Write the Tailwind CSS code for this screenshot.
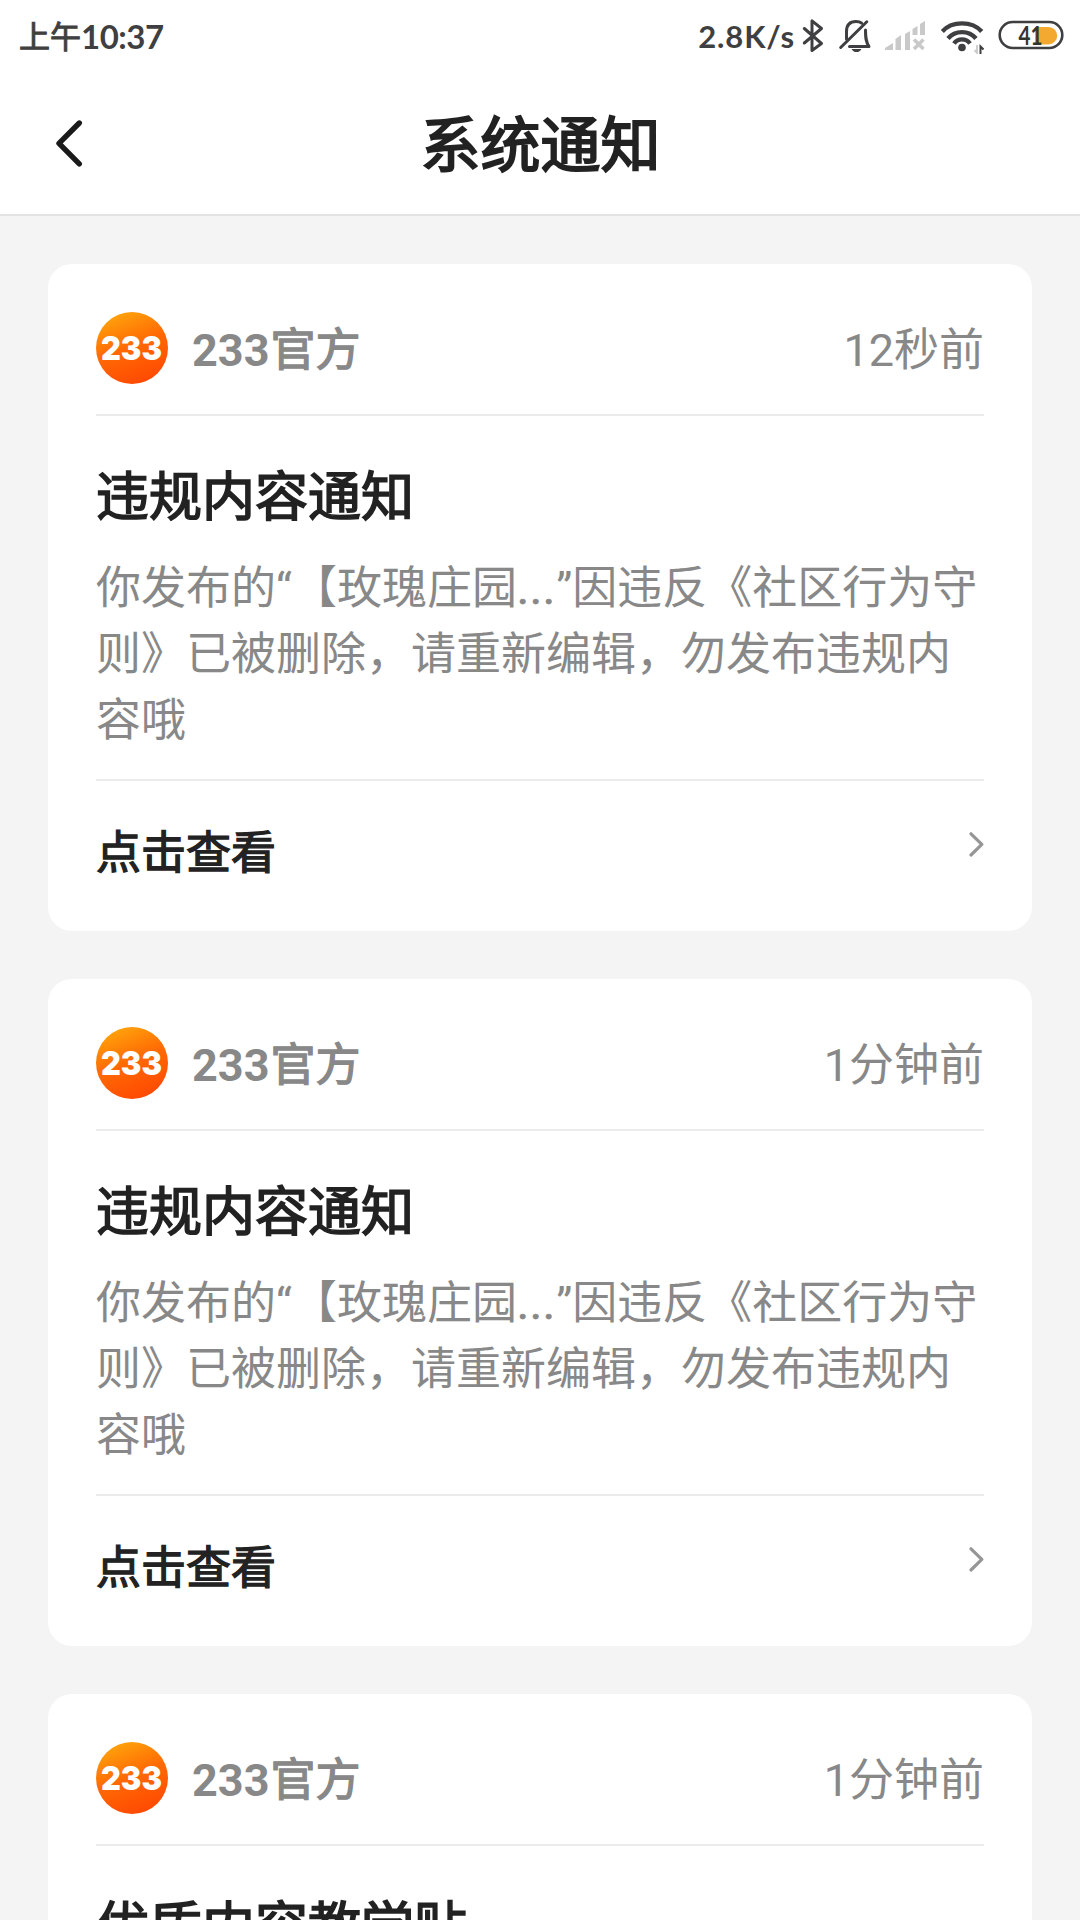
<!DOCTYPE html>
<html lang="zh-CN">
<head>
<meta charset="utf-8">
<title>系统通知</title>
<script src="https://cdn.jsdelivr.net/npm/@tailwindcss/browser@4"></script>
</head>
<body class="w-[1080px] h-[1920px] overflow-hidden bg-[#f4f4f4] text-[#222] font-[Roboto,'Noto_Sans_CJK_SC',sans-serif] [text-spacing-trim:space-all]">
<svg class="absolute size-0">
  <defs>
    <linearGradient id="g" x1="0.2" y1="0" x2="0.6" y2="1">
      <stop offset="0" stop-color="#ffa80c"/><stop offset="0.5" stop-color="#ff6a04"/><stop offset="1" stop-color="#ff4a02"/>
    </linearGradient>
    <symbol id="logo" viewBox="0 0 72 72">
      <circle cx="36" cy="36" r="36" fill="url(#g)"/>
      <text x="5" y="48" font-family="Inter, sans-serif" font-weight="900" font-size="32.500" fill="#fff" textLength="61" lengthAdjust="spacingAndGlyphs">233</text>
    </symbol>
    <symbol id="next" viewBox="0 0 16 26">
      <path d="M3 2.800 13.800 13.400 3 24" fill="none" stroke="#969696" stroke-width="3.2" stroke-linecap="round" stroke-linejoin="round"/>
    </symbol>
  </defs>
</svg>
<header class="h-[216px] bg-white border-b-2 border-[#e3e3e3]">
  <div class="h-18 pl-[19px] pr-[16px] flex items-center justify-between text-[#3f3f41] font-[Lato,'Noto_Sans_CJK_SC',sans-serif] font-bold">
    <div class="flex items-center leading-[72px]"><span class="text-[31px] font-normal [-webkit-text-stroke:1px_#3f3f41]">上午</span><span class="text-[33px] tracking-[-0.5px]">10:37</span></div>
    <div class="flex items-center">
      <span class="text-[31px] leading-[72px] tracking-[0.9px] mr-[7px]">2.8K/s</span>
      <svg class="w-[22px] h-[36px] mr-[14px]" viewBox="802 18 22 36" fill="none" stroke="#3f3f41" stroke-width="3" stroke-linejoin="round" stroke-linecap="round"><path d="M804.3 28.5 821.5 43.5 812 50.5V20.8L821.5 28.5 804.3 43"/></svg>
      <svg class="w-[34px] h-[36px] mr-[13px]" viewBox="838 18 34 36" fill="none" stroke="#3f3f41" stroke-width="3" stroke-linecap="round" stroke-linejoin="round"><path d="M840.7 47.5 866.8 21.8M846.5 39V31.5C846.5 25 850 21.5 856 21.5 858.5 21.5 860.2 22 861.5 23M865.5 30C865.5 38 865.8 42 869 46.6H849.5"/><path d="M851.5 49H861.5C860 51.5 858.5 52 856.5 52S853 51.5 851.5 49Z" fill="#3f3f41" stroke="none"/></svg>
      <svg class="w-[41px] h-[36px] mr-[15px]" viewBox="885 18 41 36" fill="#c9c9c9"><path d="M885 50v-2l8-5v7zM895.500 50V39l5.500-4v15zM905 50V34l5-3v19zM912.500 35V29l5-3v9zM920 35V24l5-3v14z"/><path d="m914 39.500 9.500 9.500M923.500 39.500 914 49" stroke="#c9c9c9" stroke-width="3.500"/></svg>
      <svg class="w-[43px] h-[36px] mr-[14px]" viewBox="941 18 43 36" fill="none" stroke="#3f3f41" stroke-width="4.400"><path d="M942.300 31.500C952 20.700 972 20.700 981.700 31.500M948 38.500C955 30 969 30 976 38.500M954 43.500C958 38 966 38 970 43.500"/><circle cx="962" cy="47.500" r="3.800" fill="#3f3f41" stroke="none"/><path d="M980.500 54V46.500L983.500 49.500" stroke-width="2"/><path d="M977 45v8l-2.500-3" stroke="#c9c9c9" stroke-width="1.800"/></svg>
      <svg class="w-[66px] h-[36px]" viewBox="998 18 66 36"><rect x="999.700" y="22" width="62.600" height="26" rx="13" fill="#fff" stroke="#3f3f41" stroke-width="2.600"/><path d="M1035 27h13.500a8.700 8.700 0 0 1 0 17.400H1035z" fill="#f3a92f"/><text x="1018.500" y="44.600" font-family="Lato, sans-serif" font-weight="700" font-size="26" fill="#333" textLength="24" lengthAdjust="spacingAndGlyphs">41</text></svg>
    </div>
  </div>
  <div class="h-[142px] px-[48px] grid grid-cols-[1fr_auto_1fr] items-center">
    <svg class="w-[40px] h-[50px]" viewBox="0 0 40 50" fill="none" stroke="#1a1a1a" stroke-width="5.400" stroke-linecap="round" stroke-linejoin="round"><path d="M31.300 5 11 25.300 31.300 45.800"/></svg>
    <h1 class="pt-[7px] pl-px text-[60px] leading-[88px] [-webkit-text-stroke:2px_#222]">系统通知</h1>
  </div>
</header>
<main class="p-12 flex flex-col gap-12">
  <article class="h-[667px] px-12 bg-white rounded-[24px]">
    <div class="h-[152px] pt-[18px] flex items-center border-b-2 border-[#ebebeb]">
      <svg class="size-[72px]"><use href="#logo"/></svg>
      <div class="ml-6 mt-1.5 text-[45px] leading-[60px] text-[#888] grow"><span class="font-bold">233</span><span class="ml-px [-webkit-text-stroke:1.3px_#888]">官方</span></div>
      <time class="mt-1.5 text-[45px] leading-[60px] text-[#888]">12秒前</time>
    </div>
    <h2 class="pt-[43px] text-[53px] leading-[78px] [-webkit-text-stroke:1.6px_#222]">违规内容通知</h2>
    <p class="pt-[19px] h-[242px] text-[45px] leading-[66px] text-[#888]">你发布的“【玫瑰庄园<span class="tracking-[1.2px] [-webkit-text-stroke:0.9px_#888]">...</span>”因违反《社区行为守<br>则》已被删除，请重新编辑，勿发布违规内<br>容哦</p>
    <a class="border-t-2 border-[#ebebeb] flex items-start justify-between"><span class="mt-[40px] text-[45px] leading-[66px] [-webkit-text-stroke:1.3px_#222]">点击查看</span><svg class="w-4 h-[26px] mt-[50px]"><use href="#next"/></svg></a>
  </article>
  <article class="h-[667px] px-12 bg-white rounded-[24px]">
    <div class="h-[152px] pt-[18px] flex items-center border-b-2 border-[#ebebeb]">
      <svg class="size-[72px]"><use href="#logo"/></svg>
      <div class="ml-6 mt-1.5 text-[45px] leading-[60px] text-[#888] grow"><span class="font-bold">233</span><span class="ml-px [-webkit-text-stroke:1.3px_#888]">官方</span></div>
      <time class="mt-1.5 text-[45px] leading-[60px] text-[#888]">1分钟前</time>
    </div>
    <h2 class="pt-[43px] text-[53px] leading-[78px] [-webkit-text-stroke:1.6px_#222]">违规内容通知</h2>
    <p class="pt-[19px] h-[242px] text-[45px] leading-[66px] text-[#888]">你发布的“【玫瑰庄园<span class="tracking-[1.2px] [-webkit-text-stroke:0.9px_#888]">...</span>”因违反《社区行为守<br>则》已被删除，请重新编辑，勿发布违规内<br>容哦</p>
    <a class="border-t-2 border-[#ebebeb] flex items-start justify-between"><span class="mt-[40px] text-[45px] leading-[66px] [-webkit-text-stroke:1.3px_#222]">点击查看</span><svg class="w-4 h-[26px] mt-[50px]"><use href="#next"/></svg></a>
  </article>
  <article class="h-[667px] shrink-0 px-12 bg-white rounded-[24px]">
    <div class="h-[152px] pt-[18px] flex items-center border-b-2 border-[#ebebeb]">
      <svg class="size-[72px]"><use href="#logo"/></svg>
      <div class="ml-6 mt-1.5 text-[45px] leading-[60px] text-[#888] grow"><span class="font-bold">233</span><span class="ml-px [-webkit-text-stroke:1.3px_#888]">官方</span></div>
      <time class="mt-1.5 text-[45px] leading-[60px] text-[#888]">1分钟前</time>
    </div>
    <h2 class="pt-[43px] text-[53px] leading-[78px] [-webkit-text-stroke:1.6px_#222]">优质内容教学贴</h2>
  </article>
</main>
</body>
</html>
